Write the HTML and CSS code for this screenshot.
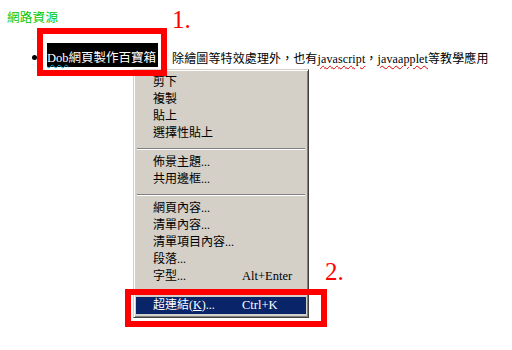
FILE: index.html
```html
<!DOCTYPE html>
<html lang="zh-Hant">
<head>
<meta charset="utf-8">
<title>網路資源</title>
<link rel="stylesheet" href="styles.css">
</head>
<body>
<div class="page">
  <div class="title">網路資源</div>
  <div class="row">
    <span class="bullet"></span>
    <span class="selected"><span class="sq-blue">Dob</span>網頁製作百寶箱</span>
    <span class="desc">除繪圖等特效處理外，也有<span class="sq-red">javascript</span>，<span class="sq-red">javaapplet</span>等教學應用</span>
  </div>

  <div class="menu">
    <div class="item"><span>剪下</span></div>
    <div class="item"><span>複製</span></div>
    <div class="item"><span>貼上</span></div>
    <div class="item"><span>選擇性貼上</span></div>
    <div class="sep"><div class="line"></div></div>
    <div class="item"><span>佈景主題...</span></div>
    <div class="item"><span>共用邊框...</span></div>
    <div class="sep"><div class="line"></div></div>
    <div class="item"><span>網頁內容...</span></div>
    <div class="item"><span>清單內容...</span></div>
    <div class="item"><span>清單項目內容...</span></div>
    <div class="item"><span>段落...</span></div>
    <div class="item"><span>字型...</span><span class="key">Alt+Enter</span></div>
    <div class="sep"><div class="line"></div></div>
    <div class="item active"><span>超連結<span class="lat">(<u>K</u>)</span>...</span><span class="key">Ctrl+K</span></div>
  </div>

  <div class="mark mark1"></div>
  <div class="mark mark2"></div>
  <div class="label label1">1.</div>
  <div class="label label2">2.</div>
</div>
</body>
</html>
```

FILE: styles.css
```css
html, body {
  margin: 0;
  padding: 0;
  background: #ffffff;
}
body {
  width: 512px;
  height: 350px;
  overflow: hidden;
  font-family: "Liberation Serif", "Noto Sans CJK TC", serif;
  color: #000;
}
.page {
  position: relative;
  width: 512px;
  height: 350px;
  padding: 10px 0 0 7px;
  box-sizing: border-box;
}
.title {
  font-size: 12.5px;
  line-height: 16px;
  letter-spacing: 0.3px;
  color: #00c800;
}
.row {
  display: flex;
  align-items: flex-start;
  margin-top: 17px;
  padding-left: 25px;
  white-space: nowrap;
}
.bullet {
  width: 5px;
  height: 5px;
  border-radius: 50%;
  background: #000;
  margin-top: 12px;
  margin-right: 10px;
  flex: none;
}
.selected {
  background: #000;
  color: #fff;
  font-size: 12.5px;
  height: 24px;
  box-sizing: border-box;
  padding: 6px 2px 0 0;
  line-height: 18px;
}
.sq-blue {
  text-decoration: underline wavy #00b0e0 1px;
  text-underline-offset: 2px;
}
.sq-red {
  text-decoration: underline wavy #e00000 1px;
  text-underline-offset: 2px;
}
.desc {
  font-size: 12px;
  letter-spacing: 0.12px;
  margin-left: 14px;
  margin-top: 7px;
  line-height: 18px;
}
.menu {
  position: absolute;
  left: 133px;
  top: 69px;
  width: 176px;
  height: 249px;
  box-sizing: border-box;
  background: #d4d0c8;
  border-top: 1px solid #d4d0c8;
  border-left: 1px solid #d4d0c8;
  border-right: 1px solid #404040;
  border-bottom: 1px solid #404040;
  box-shadow: inset 1px 1px 0 #ffffff, inset -1px -1px 0 #808080;
  padding: 4px 2px 3px 2px;
  font-size: 12px;
  z-index: 1;
}
.item {
  display: grid;
  grid-template-columns: 89px auto;
  height: 17px;
  line-height: 17px;
  padding-left: 17px;
  white-space: nowrap;
}
.item.active {
  background: #0a246a;
  color: #fff;
}
.key {
  font-size: 12.5px;
}
.lat u {
  text-underline-offset: 1px;
}
.sep {
  height: 12px;
  box-sizing: border-box;
  padding-top: 6px;
}
.sep .line {
  margin: 0 1px;
  border-top: 1px solid #808080;
  border-bottom: 1px solid #ffffff;
}
.mark {
  position: absolute;
  box-sizing: border-box;
  border: 6px solid #ff0000;
  z-index: 2;
}
.mark1 {
  left: 37px;
  top: 28px;
  width: 130px;
  height: 48px;
}
.mark2 {
  left: 125px;
  top: 289px;
  width: 202px;
  height: 38px;
}
.label {
  position: absolute;
  font-family: "Liberation Serif", serif;
  font-size: 25px;
  line-height: 24px;
  color: #ff0000;
}
.label1 {
  left: 172px;
  top: 8px;
}
.label2 {
  left: 325px;
  top: 260px;
}
```
